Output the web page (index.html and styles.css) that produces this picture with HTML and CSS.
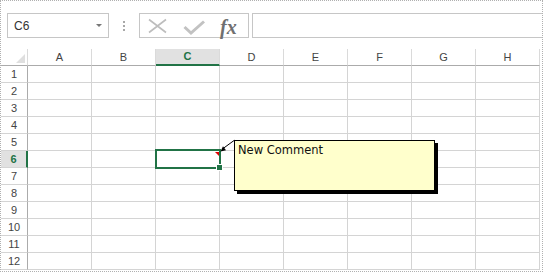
FILE: index.html
```html
<!DOCTYPE html>
<html>
<head>
<meta charset="utf-8">
<link rel="stylesheet" href="styles.css">
</head>
<body>
<div class="frame">
  <div class="toolbar">
    <div class="namebox"><span class="ref">C6</span><span class="caret"></span></div>
    <div class="grip"></div>
    <div class="fbuttons">
      <svg class="ic-x" width="20" height="16" viewBox="0 0 20 16"><path d="M2 1.5 L19 14.5 M19 1.5 L2 14.5" stroke="#bdbdbd" stroke-width="1.6" fill="none"/></svg>
      <svg class="ic-check" width="22" height="18" viewBox="0 0 22 18"><path d="M1.5 9 L8 15 L21 3.5" stroke="#c2c2c2" stroke-width="3" fill="none"/></svg>
      <span class="fx">fx</span>
    </div>
    <div class="finput"></div>
  </div>
  <div class="sheet">
    <div class="corner"></div>
    <div class="ch">A</div><div class="ch">B</div><div class="ch sel">C</div><div class="ch">D</div><div class="ch">E</div><div class="ch">F</div><div class="ch">G</div><div class="ch">H</div>

    <div class="rh">1</div><div class="c"></div><div class="c"></div><div class="c"></div><div class="c"></div><div class="c"></div><div class="c"></div><div class="c"></div><div class="c"></div>
    <div class="rh">2</div><div class="c"></div><div class="c"></div><div class="c"></div><div class="c"></div><div class="c"></div><div class="c"></div><div class="c"></div><div class="c"></div>
    <div class="rh">3</div><div class="c"></div><div class="c"></div><div class="c"></div><div class="c"></div><div class="c"></div><div class="c"></div><div class="c"></div><div class="c"></div>
    <div class="rh">4</div><div class="c"></div><div class="c"></div><div class="c"></div><div class="c"></div><div class="c"></div><div class="c"></div><div class="c"></div><div class="c"></div>
    <div class="rh">5</div><div class="c"></div><div class="c"></div><div class="c"></div><div class="c"></div><div class="c"></div><div class="c"></div><div class="c"></div><div class="c"></div>
    <div class="rh sel">6</div><div class="c"></div><div class="c"></div><div class="c active"><span class="sel-box"></span><span class="note-mark"></span><span class="handle"></span></div><div class="c"></div><div class="c"></div><div class="c"></div><div class="c"></div><div class="c"></div>
    <div class="rh">7</div><div class="c"></div><div class="c"></div><div class="c"></div><div class="c"></div><div class="c"></div><div class="c"></div><div class="c"></div><div class="c"></div>
    <div class="rh">8</div><div class="c"></div><div class="c"></div><div class="c"></div><div class="c"></div><div class="c"></div><div class="c"></div><div class="c"></div><div class="c"></div>
    <div class="rh">9</div><div class="c"></div><div class="c"></div><div class="c"></div><div class="c"></div><div class="c"></div><div class="c"></div><div class="c"></div><div class="c"></div>
    <div class="rh">10</div><div class="c"></div><div class="c"></div><div class="c"></div><div class="c"></div><div class="c"></div><div class="c"></div><div class="c"></div><div class="c"></div>
    <div class="rh">11</div><div class="c"></div><div class="c"></div><div class="c"></div><div class="c"></div><div class="c"></div><div class="c"></div><div class="c"></div><div class="c"></div>
    <div class="rh">12</div><div class="c"></div><div class="c"></div><div class="c"></div><div class="c"></div><div class="c"></div><div class="c"></div><div class="c"></div><div class="c"></div>
  </div>
  <svg class="arrow" width="24" height="20" viewBox="0 0 24 20">
    <path d="M20.3 4.3 L9.5 12.2" stroke="#000" stroke-width="1" fill="none"/>
    <polygon points="6.5,15.5 12,14.3 9,10.2" fill="#000"/>
  </svg>
  <div class="comment">New Comment</div>
</div>
</body>
</html>
```

FILE: styles.css
```css
html, body {
  margin: 0;
  padding: 0;
  background: #fff;
}

.frame {
  position: relative;
  width: 543px;
  height: 272px;
  box-sizing: border-box;
  border: 1px dotted #b0b0b0;
  overflow: hidden;
  font-family: "Liberation Sans", Arial, sans-serif;
  color: #444;
}

.toolbar {
  display: flex;
  align-items: center;
  height: 25px;
  margin-top: 12px;
}

.namebox {
  margin-left: 6px;
  width: 102px;
  height: 25px;
  box-sizing: border-box;
  border: 1px solid #c6c6c6;
  display: flex;
  align-items: center;
  justify-content: space-between;
  padding: 0 6px 0 6px;
  font-size: 12px;
  color: #333;
}

.caret {
  width: 0;
  height: 0;
  border-left: 3px solid transparent;
  border-right: 3px solid transparent;
  border-top: 3px solid #777;
  margin-top: -1px;
}

.grip {
  width: 2px;
  height: 10px;
  margin: 0 14px;
  background: repeating-linear-gradient(#a8a8a8 0 2px, transparent 2px 4px);
}

.fbuttons {
  width: 110px;
  height: 25px;
  box-sizing: border-box;
  border: 1px solid #c6c6c6;
  display: flex;
  align-items: center;
  padding-left: 7px;
}

.ic-x {
  display: block;
  margin-top: 1px;
}

.ic-check {
  display: block;
  margin-left: 16px;
  margin-top: 3px;
}

.fx {
  margin-left: 15px;
  margin-top: 2px;
  font-family: "Liberation Serif", "Times New Roman", serif;
  font-style: italic;
  font-weight: bold;
  font-size: 20px;
  line-height: 20px;
  color: #707070;
}

.finput {
  flex: 1;
  margin-left: 3px;
  height: 25px;
  box-sizing: border-box;
  border: 1px solid #c6c6c6;
  border-right: none;
}

.sheet {
  margin-top: 11px;
  display: grid;
  grid-template-columns: 27px repeat(8, 64px);
  grid-auto-rows: 17px;
}

.sheet > div {
  box-sizing: border-box;
  border-right: 1px solid #d4d4d4;
  border-bottom: 1px solid #d4d4d4;
}

.corner {
  position: relative;
  border-bottom-color: #ababab !important;
  border-right-color: #dadada !important;
}

.corner::after {
  content: "";
  position: absolute;
  right: 2px;
  bottom: 2px;
  width: 0;
  height: 0;
  border-left: 9px solid transparent;
  border-bottom: 9px solid #dfdfdf;
}

.ch {
  border-right-color: #dadada !important;
  border-bottom-color: #ababab !important;
  font-size: 11px;
  line-height: 16px;
  text-align: center;
  color: #444;
}

.ch.sel {
  background: #e1e1e1;
  border-bottom: 2px solid #217346 !important;
  line-height: 15px;
  color: #217346;
  font-weight: bold;
}

.rh {
  border-right-color: #ababab !important;
  font-size: 11px;
  line-height: 16px;
  text-align: center;
  color: #444;
}

.rh.sel {
  background: #e1e1e1;
  border-right: 2px solid #217346 !important;
  color: #217346;
  font-weight: bold;
}

.active {
  position: relative;
}

.sel-box {
  position: absolute;
  left: -1px;
  top: -2px;
  right: -2px;
  bottom: -2px;
  border: 2px solid #217346;
}

.note-mark {
  position: absolute;
  left: 59px;
  top: 1px;
  width: 0;
  height: 0;
  border-top: 4px solid #e00000;
  border-left: 4px solid transparent;
}

.handle {
  position: absolute;
  left: 61px;
  top: 14px;
  width: 5px;
  height: 5px;
  background: #217346;
  box-shadow: 0 0 0 1px #fff;
}

.arrow {
  position: absolute;
  left: 213px;
  top: 135px;
}

.comment {
  position: absolute;
  left: 233px;
  top: 139px;
  width: 201px;
  height: 51px;
  box-sizing: border-box;
  border: 1px solid #000;
  background: #ffffcc;
  box-shadow: 3px 3px 0 #000;
  padding: 2px 3px;
  font-family: "DejaVu Sans", Tahoma, sans-serif;
  font-size: 11.5px;
  line-height: 14px;
  color: #111;
}
```
